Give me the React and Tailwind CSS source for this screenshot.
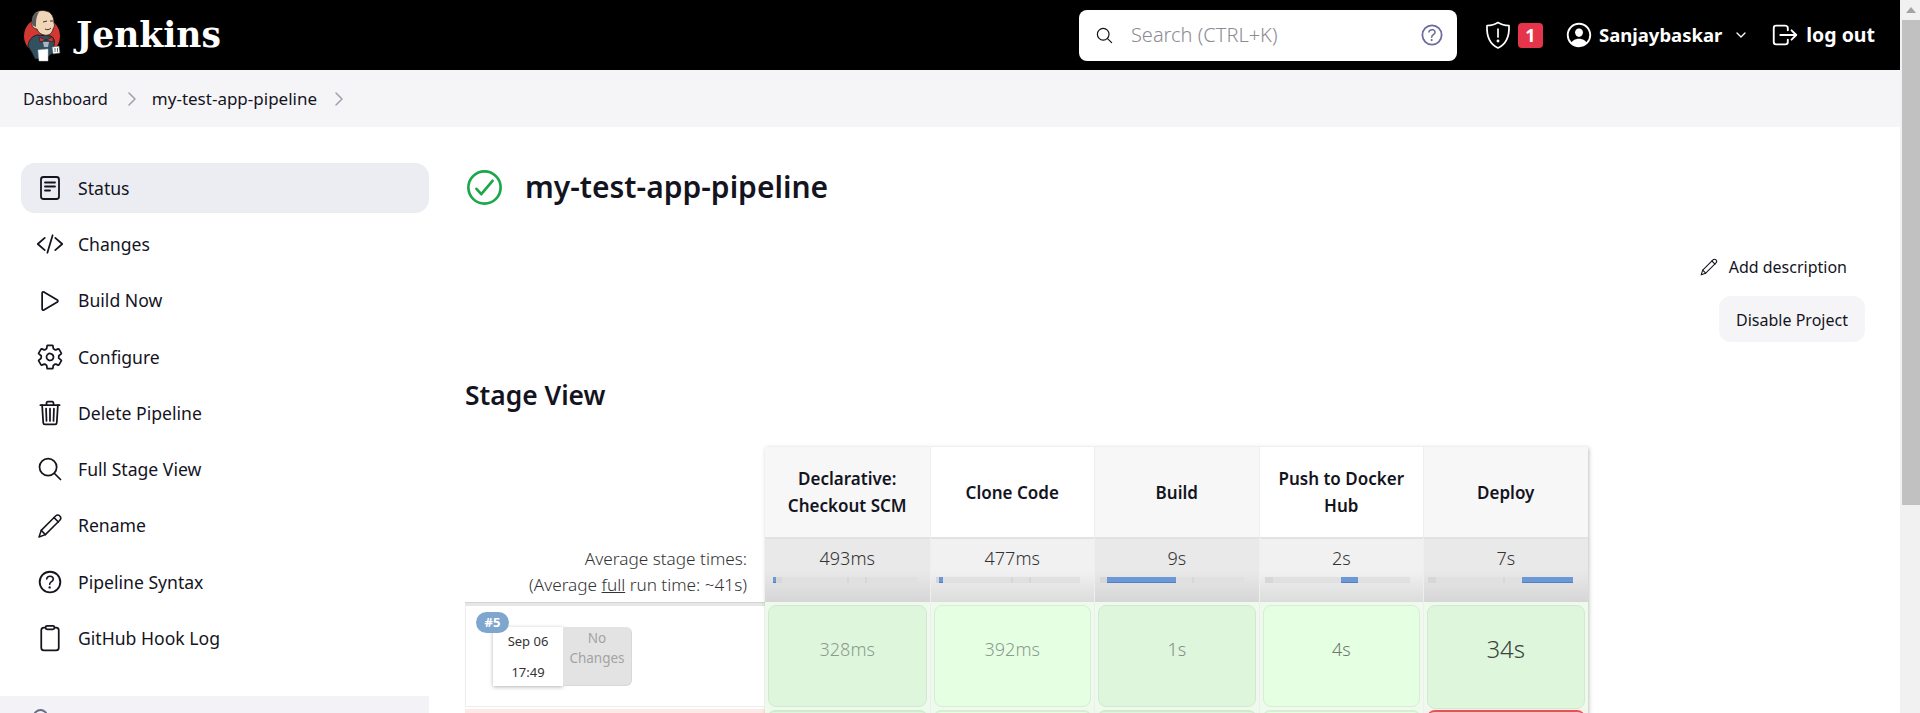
import {
  IoCodeSlashOutline,
  IoPlayOutline,
  IoSettingsOutline,
  IoTrashOutline,
  IoSearchOutline,
  IoHelpCircleOutline,
  IoClipboardOutline,
  IoPersonCircleOutline,
  IoLogOutOutline,
  IoCheckmarkCircleOutline,
} from "react-icons/io5";

const StatusIcon = ({ size = 28 }) => (
  <svg width={size} height={size} viewBox="0 0 28 28" fill="none" stroke="currentColor" strokeWidth="1.8" strokeLinecap="round">
    <rect x="5" y="3" width="18" height="22" rx="2.5" />
    <path d="M9 8.5h10M9 12.5h10M9 16.5h5" />
  </svg>
);

const PencilIcon = ({ size = 28 }) => (
  <svg width={size} height={size} viewBox="0 0 28 28" fill="none" stroke="currentColor" strokeWidth="1.5" strokeLinejoin="round" strokeLinecap="round">
    <path d="M3 25l2.2-6.6L19.6 4c1.2-1.2 3-1.2 4.2 0s1.2 3 0 4.2L9.4 22.6z" />
    <path d="M5.2 18.4l4.2 4.2M18 5.6l4.4 4.4" />
  </svg>
);

const ShieldIcon = () => (
  <svg width="26" height="28" viewBox="0 0 26 28" fill="none" stroke="currentColor" strokeWidth="1.7" strokeLinecap="round" strokeLinejoin="round">
    <path d="M13 1.5c3 2 6.500 3 11 3 .5 10-2.500 18.500-11 22.500C4.500 23 1.500 14.500 2 4.500c4.500 0 8-1 11-3z" />
    <path d="M13 8v8" />
    <circle cx="13" cy="20" r="0.6" fill="currentColor" />
  </svg>
);

const ChevronRight = () => (
  <svg width="8" height="14" viewBox="0 0 8 14" fill="none" stroke="#a0a0ac" strokeWidth="1.5" strokeLinecap="round" strokeLinejoin="round">
    <path d="M1 1l6 6-6 6" />
  </svg>
);

const ChevronDown = () => (
  <svg width="10" height="6" viewBox="0 0 10 6" fill="none" stroke="currentColor" strokeWidth="1.3" strokeLinecap="round" strokeLinejoin="round">
    <path d="M1 1l4 4 4-4" />
  </svg>
);

const JenkinsLogo = () => (
  <svg width="40" height="52" viewBox="0 0 40 52">
    <circle cx="19" cy="26" r="18" fill="#d33833" />
    <path d="M5 36c1-7 5-10 9-11l14 1c3 2 4 5 3 9l-1 8-8 6H12l-3-6z" fill="#335061" stroke="#111" strokeWidth="0.8" />
    <path d="M9 11C9 3 16-1 23 1c6 1 8 7 8 12 1 2 0 5-1 6-1 5-5 7-9 6-4-1-6-3-7-6-3 0-6-3-5-7z" fill="#f0d6b7" stroke="#222" strokeWidth="0.8" />
    <path d="M9 11C10 5 13 2 16 2c-2 3-3 7-3 11l0 4c-3-1-5-3-4-6z" fill="#5b5a5c" />
    <path d="M20 12l4-1M27 11l3 0M22 19c2 1 4 1 6-1" stroke="#222" strokeWidth="0.9" fill="none" />
    <path d="M16 27l7 3 7-3 0 5-7-2-6 2z" fill="#d33833" stroke="#111" strokeWidth="0.5" />
    <path d="M20 32h6l-1 5h-4z" fill="#a7b7c4" />
    <path d="M15 40l10-1 0 12H16z" fill="#fff" stroke="#bbb" strokeWidth="0.5" />
    <path d="M29 37l7-1 1 7-7 1z" fill="#fff" stroke="#555" strokeWidth="0.6" />
    <path d="M32 38v4M34.500 38v4" stroke="#335061" strokeWidth="0.8" />
  </svg>
);

const sideItems = [
  { label: "Status", icon: <StatusIcon />, active: true },
  { label: "Changes", icon: <IoCodeSlashOutline size={28} /> },
  { label: "Build Now", icon: <IoPlayOutline size={28} /> },
  { label: "Configure", icon: <IoSettingsOutline size={28} /> },
  { label: "Delete Pipeline", icon: <IoTrashOutline size={28} /> },
  { label: "Full Stage View", icon: <IoSearchOutline size={28} /> },
  { label: "Rename", icon: <PencilIcon /> },
  { label: "Pipeline Syntax", icon: <IoHelpCircleOutline size={30} /> },
  { label: "GitHub Hook Log", icon: <IoClipboardOutline size={28} /> },
];

// one entry per stage, bar segments are px widths out of the track
const stages = [
  {
    name: ["Declarative:", "Checkout SCM"],
    avg: "493ms",
    time: "328ms",
    text: "text-[#8f9a8f]",
    barOffset: "mr-[3px]",
    segs: [[3, "b"], [6, "d"], [65, "l"], [2, "d"], [16, "l"], [2, "d"], [50, "l"]],
  },
  {
    name: ["Clone Code"],
    avg: "477ms",
    time: "392ms",
    text: "text-[#8f9a8f]",
    barOffset: "mr-[8px]",
    segs: [[3, "d"], [4, "b"], [68, "l"], [2, "d"], [16, "l"], [2, "d"], [49, "l"]],
  },
  {
    name: ["Build"],
    avg: "9s",
    time: "1s",
    text: "text-[#848e84]",
    barOffset: "mr-[8px]",
    segs: [[7, "d"], [69, "b"], [16, "l"], [2, "d"], [50, "l"]],
  },
  {
    name: ["Push to Docker", "Hub"],
    avg: "2s",
    time: "4s",
    text: "text-[#6f786f]",
    barOffset: "mr-[8px]",
    segs: [[8, "d"], [68, "l"], [17, "b"], [52, "l"]],
  },
  {
    name: ["Deploy"],
    avg: "7s",
    time: "34s",
    text: "text-[#3c423c]",
    barOffset: "mr-[10px]",
    segs: [[8, "d"], [67, "l"], [2, "d"], [17, "l"], [51, "b"]],
  },
];

const segClass = {
  b: "bg-[#6c98d8] border-b border-[#4d7ec6]",
  l: "bg-[#e0e0e0]",
  d: "bg-[#d7d7d7]",
};

const StageColumn = ({ stage, index }) => {
  const odd = index % 2 === 0;
  const last = index === stages.length - 1;
  return (
    <div className={`w-[164.5px] flex flex-col ${index > 0 ? "border-l border-[#eeeeee]" : ""}`}>
      <div className={`h-[90px] flex flex-col items-center justify-center font-semibold text-[17px] leading-[27px] text-[#14141f] ${odd ? "bg-[#f7f7f7]" : "bg-white"}`}>
        {stage.name.map((line) => (
          <span key={line}>{line}</span>
        ))}
      </div>
      <div className={`h-[65px] border-t-2 border-[#e2e2e2] flex flex-col items-center bg-gradient-to-b ${odd ? "from-[#e9e9e9] via-[#e9e9e9] to-[#d6d6d6]" : "from-[#f1f1f1] via-[#f1f1f1] to-[#dcdcdc]"}`}>
        <span className="mt-[6px] text-[18px] leading-[26px] text-[#333] font-light">{stage.avg}</span>
        <div className={`mt-[6px] flex h-[6px] w-[145px] ${stage.barOffset}`}>
          {stage.segs.map(([w, kind], i) => (
            <div key={i} className={`h-[6px] ${segClass[kind]}`} style={{ width: w }} />
          ))}
        </div>
      </div>
      <div className="bg-[#eefbec] pt-[3px] px-[3px]">
        <div
          className={`rounded-lg border text-center font-light ${last ? "h-[104px] text-[24px] leading-[32px] pt-[27px]" : "h-[102px] text-[18px] leading-[28px] pt-[29px]"} ${stage.text} ${odd ? "bg-[#def7dc] border-[#d3e8d1]" : "bg-[#e5ffe3] border-[#d8ecd6]"}`}
        >
          {stage.time}
        </div>
      </div>
      <div className={`h-[10px] px-[3px] ${last ? "bg-[#f7f0f0] pt-[1px]" : "bg-[#eefbec] pt-[3px]"}`}>
        <div className={`h-full rounded-t-lg border-t-2 ${last ? "border-[#e55353] bg-[#f4c7c3]" : odd ? "border-[#d3e8d1] bg-[#def7dc]" : "border-[#d8ecd6] bg-[#e5ffe3]"}`} />
      </div>
    </div>
  );
};

export default function App() {
  return (
    <div className="flex h-[713px] overflow-hidden bg-white font-['Noto_Sans',sans-serif] text-[#14141f]">
      <div className="flex-1 min-w-0 flex flex-col">
        <header className="h-[70px] bg-black flex items-center text-white">
          <div className="ml-[23px] mt-[1px] flex items-center">
            <JenkinsLogo />
            <span className="ml-[13px] font-['DejaVu_Serif',serif] font-bold text-[34.5px] leading-none">Jenkins</span>
          </div>
          <div className="ml-auto w-[378px] h-[51px] bg-white rounded-lg flex items-center text-[#14141f]">
            <IoSearchOutline size={19} className="ml-[16px]" />
            <span className="ml-[17px] text-[20px] text-[#8c8c94] font-light">Search (CTRL+K)</span>
            <IoHelpCircleOutline size={28} className="ml-auto mr-[11px] text-[#6a6a9c]" />
          </div>
          <span className="ml-[28px]"><ShieldIcon /></span>
          <span className="ml-[7px] w-[25px] h-[25px] rounded bg-[#e5354b] flex items-center justify-center font-bold text-[18px]">1</span>
          <IoPersonCircleOutline size={30} className="ml-[21px]" />
          <span className="ml-[5px] font-bold text-[18.5px]">Sanjaybaskar</span>
          <span className="ml-[14px]"><ChevronDown /></span>
          <IoLogOutOutline size={30} className="ml-[24px]" />
          <span className="ml-[6px] mr-[25px] font-bold text-[19.5px]">log out</span>
        </header>

        <nav className="h-[57px] bg-[#f5f5f7] flex items-center pl-[23px] pt-[1px] text-[#14141f]">
          <span className="text-[16.4px]">Dashboard</span>
          <span className="ml-[20px] mr-[16px]"><ChevronRight /></span>
          <span className="text-[17px]">my-test-app-pipeline</span>
          <span className="ml-[18px]"><ChevronRight /></span>
        </nav>

        <div className="flex flex-1 min-h-0">
          <aside className="w-[429px] shrink-0 pt-[36px] flex flex-col">
            <ul className="pl-[21px] flex flex-col gap-[6.25px]">
              {sideItems.map((item) => (
                <li
                  key={item.label}
                  className={`h-[50px] rounded-[14px] flex items-center text-[17.6px] ${item.active ? "bg-[#ecedf2]" : ""}`}
                >
                  <span className="w-[57px] flex justify-center">{item.icon}</span>
                  <span>{item.label}</span>
                </li>
              ))}
            </ul>
            <div className="mt-[33px] flex-1 bg-[#f3f2f7] pt-[13px] pl-[33px]">
              <div className="w-[15px] h-[15px] rounded-full border-2 border-[#6a6a8a]" />
            </div>
          </aside>

          <main className="flex-1 min-w-0 pl-[36px] pr-[35px] pt-[35px]">
            <div className="h-[50px] flex items-center">
              <IoCheckmarkCircleOutline size={43} className="text-[#1ea64b] -ml-[2px]" />
              <h1 className="ml-[19px] text-[30px] font-semibold leading-none">my-test-app-pipeline</h1>
            </div>
            <div className="mt-[32px] flex flex-col items-end">
              <div className="flex items-center mr-[18px] text-[16px] h-[46px]">
                <PencilIcon size={20} />
                <span className="ml-[10px]">Add description</span>
              </div>
              <div className="mt-[6px] h-[46px] w-[146px] pt-[1px] rounded-xl bg-[#f5f5f7] flex items-center justify-center text-[16px]">
                Disable Project
              </div>
            </div>
            <h2 className="mt-[36px] text-[26.4px] font-semibold leading-[34px]">Stage View</h2>

            <div className="mt-[35px] flex">
              <div className="w-[300px] shrink-0">
                <div className="h-[90px]" />
                <div className="h-[65px] flex flex-col items-end justify-center pr-[18px] pt-[5px] text-[17.2px] leading-[26px] font-light text-[#333]">
                  <span>Average stage times:</span>
                  <span>
                    (Average <u>full</u> run time: ~41s)
                  </span>
                </div>
                <div className="h-[4px] bg-[#e6e6e6] border-t border-[#d4d4d4]" />
                <div className="relative h-[101px] border-x border-b border-[#ececec] bg-white pt-[21px] pl-[27px]">
                  <div className="absolute left-[10px] top-[6px] z-10 w-[33px] h-[21px] rounded-full bg-[#7fa6cf] flex items-center justify-center text-white font-bold text-[13px]">
                    #5
                  </div>
                  <div className="flex h-[59px]">
                    <div className="w-[70px] bg-white shadow-[0_1px_4px_rgba(0,0,0,0.3)] flex flex-col items-center justify-between py-[4px] text-[13px] leading-[20px] text-[#333]">
                      <span>Sep 06</span>
                      <span>17:49</span>
                    </div>
                    <div className="w-[69px] bg-[#e3e3e3] rounded-r-md border-r border-b border-[#d8d8d8] flex flex-col items-center pt-[1px] text-[13.5px] leading-[20px] text-[#a3a3a3]">
                      <span>No</span>
                      <span>Changes</span>
                    </div>
                  </div>
                </div>
                <div className="mt-[2px] h-[20px] bg-[#fdeae6]" />
              </div>
              <div className="flex shadow-[1px_1px_4px_rgba(0,0,0,0.25)] self-start">
                {stages.map((stage, i) => (
                  <StageColumn key={stage.avg} stage={stage} index={i} />
                ))}
              </div>
            </div>
          </main>
        </div>
      </div>

      <div className="w-[20px] shrink-0 bg-[#f1f1f1] flex flex-col items-center pl-[2px]">
        <div className="h-[20px] flex items-center">
          <div className="w-0 h-0 border-x-[5px] border-x-transparent border-b-[6px] border-b-[#a3a3a3]" />
        </div>
        <div className="w-full h-[485px] bg-[#c1c1c1]" />
      </div>
    </div>
  );
}
